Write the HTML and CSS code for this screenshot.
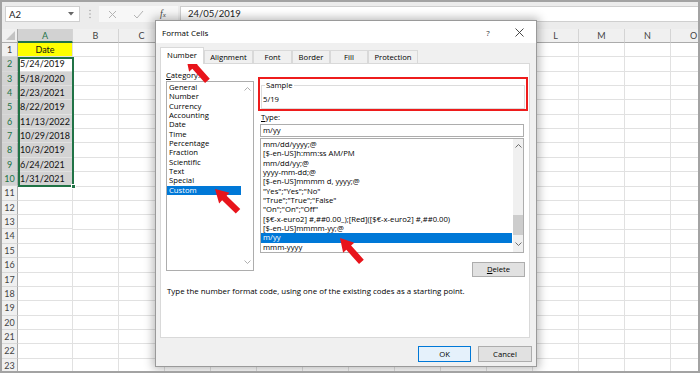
FILE: index.html
```html
<!DOCTYPE html>
<html>
<head>
<meta charset="utf-8">
<link rel="stylesheet" href="styles.css">
</head>
<body>
<div class="frame">
  <div class="fbar">
    <div class="namebox"><span>A2</span><svg class="caret" width="6" height="4" viewBox="0 0 6 4"><path d="M0 0H6L3 3.5Z" fill="#666"/></svg></div>
    <svg class="dots" width="4" height="10" viewBox="0 0 4 10"><circle cx="2" cy="1.5" r="0.7" fill="#9a9a9a"/><circle cx="2" cy="5" r="0.7" fill="#9a9a9a"/><circle cx="2" cy="8.5" r="0.7" fill="#9a9a9a"/></svg>
    <div class="fbtns">
      <svg width="9" height="9" viewBox="0 0 9 9"><path d="M1 1L8 8M8 1L1 8" stroke="#b3b3b3" stroke-width="1"/></svg>
      <svg width="11" height="9" viewBox="0 0 11 9"><path d="M1 5L4 8L10 1" stroke="#b3b3b3" stroke-width="1" fill="none"/></svg>
      <span class="fx">f<span class="fxx">x</span></span>
    </div>
    <div class="finput">24/05/2019</div>
  </div>

  <div class="sheet">
    <div class="colheads">
      <div class="corner"><svg width="9" height="9" viewBox="0 0 9 9"><path d="M9 0V9H0Z" fill="#c3c3c3"/></svg></div>
      <div class="ch cha">A</div>
      <div class="ch">B</div><div class="ch">C</div><div class="ch"></div><div class="ch"></div>
      <div class="ch"></div><div class="ch"></div><div class="ch"></div><div class="ch"></div>
      <div class="ch"></div><div class="ch"></div><div class="ch">L</div><div class="ch">M</div>
      <div class="ch">N</div><div class="ch">O</div>
    </div>
    <div class="sbody">
      <div class="rowheads">
        <div class="rh">1</div><div class="rh on">2</div><div class="rh on">3</div><div class="rh on">4</div>
        <div class="rh on">5</div><div class="rh on">6</div><div class="rh on">7</div><div class="rh on">8</div>
        <div class="rh on">9</div><div class="rh on">10</div><div class="rh">11</div><div class="rh">12</div>
        <div class="rh">13</div><div class="rh">14</div><div class="rh">15</div><div class="rh">16</div>
        <div class="rh">17</div><div class="rh">18</div><div class="rh">19</div><div class="rh">20</div>
        <div class="rh">21</div><div class="rh">22</div><div class="rh">23</div>
      </div>
      <div class="cola">
        <div class="cell head">Date</div>
        <div class="cell">5/24/2019</div>
        <div class="cell hl">5/18/2020</div>
        <div class="cell hl">2/23/2021</div>
        <div class="cell hl">8/22/2019</div>
        <div class="cell hl">11/13/2022</div>
        <div class="cell hl">10/29/2018</div>
        <div class="cell hl">10/3/2019</div>
        <div class="cell hl">6/24/2021</div>
        <div class="cell hl">1/31/2021</div>
        <div class="cell"></div><div class="cell"></div><div class="cell"></div><div class="cell"></div>
        <div class="cell"></div><div class="cell"></div><div class="cell"></div><div class="cell"></div>
        <div class="cell"></div><div class="cell"></div><div class="cell"></div><div class="cell"></div>
        <div class="cell"></div>
        <div class="selbox"><span class="handle"></span></div>
      </div>
      <div class="rest"></div>
    </div>
  </div>

  <div class="dialog">
    <div class="dtitle">
      <span class="dt">Format Cells</span>
      <span class="help">?</span>
      <svg class="dclose" width="9" height="9" viewBox="0 0 9 9"><path d="M0.5 0.5L8.5 8.5M8.5 0.5L0.5 8.5" stroke="#333" stroke-width="0.9"/></svg>
    </div>
    <div class="dbody">
      <div class="tabs">
        <div class="tab on w44">Number</div>
        <div class="tab w49">Alignment</div>
        <div class="tab w39">Font</div>
        <div class="tab w38">Border</div>
        <div class="tab w38">Fill</div>
        <div class="tab w50">Protection</div>
      </div>
      <div class="panel">
        <div class="prow">
          <div class="pleft">
            <div class="lbl"><u>C</u>ategory:</div>
            <div class="lbox cat">
              <div class="items">
                <div class="it">General</div>
                <div class="it">Number</div>
                <div class="it">Currency</div>
                <div class="it">Accounting</div>
                <div class="it">Date</div>
                <div class="it">Time</div>
                <div class="it">Percentage</div>
                <div class="it">Fraction</div>
                <div class="it">Scientific</div>
                <div class="it">Text</div>
                <div class="it">Special</div>
                <div class="it sel">Custom</div>
              </div>
              <div class="vs vs-cat">
                <svg class="chev" width="7" height="4" viewBox="0 0 7 4"><path d="M0.5 3.5L3.5 0.5L6.5 3.5" stroke="#a6a6a6" fill="none" stroke-width="0.9"/></svg>
                <svg class="chev" width="7" height="4" viewBox="0 0 7 4"><path d="M0.5 0.5L3.5 3.5L6.5 0.5" stroke="#a6a6a6" fill="none" stroke-width="0.9"/></svg>
              </div>
            </div>
          </div>
          <div class="pright">
            <div class="redbox">
              <fieldset class="sample">
                <legend>Sample</legend>
                <div class="sv">5/19</div>
              </fieldset>
            </div>
            <div class="lbl tlbl"><u>T</u>ype:</div>
            <div class="tinput">m/yy</div>
            <div class="lbox types">
              <div class="items">
                <div class="it">mm/dd/yyyy;@</div>
                <div class="it">[$-en-US]h:mm:ss AM/PM</div>
                <div class="it">mm/dd/yy;@</div>
                <div class="it">yyyy-mm-dd;@</div>
                <div class="it">[$-en-US]mmmm d, yyyy;@</div>
                <div class="it">"Yes";"Yes";"No"</div>
                <div class="it">"True";"True";"False"</div>
                <div class="it">"On";"On";"Off"</div>
                <div class="it">[$€-x-euro2] #,##0.00_);[Red]([$€-x-euro2] #,##0.00)</div>
                <div class="it">[$-en-US]mmmm-yy;@</div>
                <div class="it sel">m/yy</div>
                <div class="it">mmm-yyyy</div>
              </div>
              <div class="vs vs-type">
                <svg class="chev" width="7" height="4" viewBox="0 0 7 4"><path d="M0.5 3.5L3.5 0.5L6.5 3.5" stroke="#606060" fill="none" stroke-width="0.9"/></svg>
                <div class="track"><div class="thumb"></div></div>
                <svg class="chev" width="7" height="4" viewBox="0 0 7 4"><path d="M0.5 0.5L3.5 3.5L6.5 0.5" stroke="#606060" fill="none" stroke-width="0.9"/></svg>
              </div>
            </div>
            <div class="brow"><div class="btn del"><u>D</u>elete</div></div>
          </div>
        </div>
        <div class="hint">Type the number format code, using one of the existing codes as a starting point.</div>
      </div>
      <div class="dbtns">
        <div class="btn ok">OK</div>
        <div class="btn cancel">Cancel</div>
      </div>
    </div>
  </div>

  <svg class="arrows" width="700" height="373" viewBox="0 0 700 373">
    <polygon transform="translate(186 57) rotate(48)" points="0,0 13,-7.5 13,-3.2 32,-3.2 32,3.2 13,3.2 13,7.5" fill="#e8141b"/>
    <polygon transform="translate(215 189) rotate(44)" points="0,0 13,-7.5 13,-3.2 32,-3.2 32,3.2 13,3.2 13,7.5" fill="#e8141b"/>
    <polygon transform="translate(340 238) rotate(48)" points="0,0 13,-7.5 13,-3.2 32,-3.2 32,3.2 13,3.2 13,7.5" fill="#e8141b"/>
  </svg>
</div>
</body>
</html>
```

FILE: styles.css
```css
* { box-sizing: border-box; margin: 0; padding: 0; }
html, body { width: 700px; height: 373px; overflow: hidden; background: #fff; }
body { font-family: "Open Sans", "Noto Sans", sans-serif; color: #000; }

.frame {
  position: relative;
  width: 700px;
  height: 373px;
  border: 2px solid #a3a3a3;
  overflow: hidden;
  display: flex;
  flex-direction: column;
  background: #fff;
}

/* formula bar */
.fbar {
  height: 27px;
  flex: none;
  background: #ececec;
  display: flex;
  align-items: flex-start;
  padding: 4px 0 0 3px;
}
.namebox {
  width: 75px;
  height: 16px;
  background: #fff;
  border: 1px solid #cfcfcf;
  display: flex;
  align-items: center;
  justify-content: space-between;
  padding: 0 5px 0 3px;
  font: 9.5px "Lato", sans-serif;
  color: #222;
}
.dots { margin: 3px 0 0 8px; }
.fbtns {
  margin-left: 7px;
  width: 79px;
  height: 16px;
  background: #f7f7f7;
  display: flex;
  align-items: center;
  padding-left: 9px;
  gap: 16px;
}
.fx { font: italic 9.5px "Liberation Serif", serif; color: #444; }
.fxx { font-size: 7px; }
.finput {
  flex: 1;
  height: 16px;
  margin-left: 2px;
  background: #fff;
  border: 1px solid #cfcfcf;
  border-right: none;
  padding-left: 7px;
  font: 9.5px "Lato", sans-serif;
  line-height: 14px;
  color: #222;
}

/* sheet */
.sheet { flex: 1; display: flex; flex-direction: column; min-height: 0; }
.colheads { display: flex; height: 14px; flex: none; }
.corner {
  width: 16px; flex: none;
  background: #f0f0f0;
  border-right: 1px solid #ababab;
  border-bottom: 1px solid #ababab;
  display: flex; align-items: flex-end; justify-content: flex-end;
  padding: 0 2px 2px 0;
}
.ch {
  width: 46px; flex: none;
  background: #f0f0f0;
  border-right: 1px solid #d4d4d4;
  border-bottom: 1px solid #ababab;
  text-align: center;
  font: 9px "Lato", sans-serif;
  line-height: 13px;
  color: #444;
}
.ch.cha {
  width: 55px;
  background: #d2d2d2;
  color: #217346;
  border-bottom: 2px solid #217346;
}
.sbody { flex: 1; display: flex; min-height: 0; }
.rowheads { width: 16px; flex: none; }
.rh {
  height: 14.35px;
  background: #f0f0f0;
  border-bottom: 1px solid #d8d8d8;
  border-right: 1px solid #ababab;
  text-align: center;
  font: 9px "Lato", sans-serif;
  line-height: 13.35px;
  color: #444;
}
.rh.on { background: #d2d2d2; color: #217346; }
.cola { width: 55px; flex: none; position: relative; }
.cell {
  height: 14.35px;
  border-bottom: 1px solid #e1e1e1;
  border-right: 1px solid #e1e1e1;
  padding-left: 2px;
  font: 9px "Lato", sans-serif;
  line-height: 13.35px;
  color: #111;
  white-space: nowrap;
}
.cell.head { background: #ffff00; text-align: center; padding-left: 0; }
.cell.hl { background: #d3d3d3; }
.selbox {
  position: absolute;
  left: 0; top: 13.85px;
  width: 56px; height: 130.2px;
  border: 2px solid #217346;
}
.handle {
  position: absolute;
  right: -4px; bottom: -4px;
  width: 5px; height: 5px;
  background: #217346;
  border: 1px solid #fff;
}
.rest {
  flex: 1;
  background-image:
    repeating-linear-gradient(to bottom, transparent 0, transparent 13.35px, #e1e1e1 13.35px, #e1e1e1 14.35px),
    repeating-linear-gradient(to right, transparent 0, transparent 45px, #e1e1e1 45px, #e1e1e1 46px);
}

/* dialog */
.dialog {
  position: absolute;
  left: 153px; top: 18px;
  width: 382px; height: 347px;
  border: 1px solid #9a9a9a;
  background: #f0f0f0;
  box-shadow: 0 0 9px 2px rgba(0, 0, 0, 0.28);
  display: flex;
  flex-direction: column;
  font-size: 7.7px;
}
.dtitle {
  height: 22px; flex: none;
  background: #fff;
  display: flex;
  align-items: center;
  padding-left: 6px;
}
.dt { flex: 1; font-size: 8px; }
.help { width: 12px; text-align: center; font-size: 8px; color: #333; }
.dclose { margin: 0 12px 0 21px; }
.dbody { flex: 1; padding: 4px 4px 0 4px; display: flex; flex-direction: column; }
.tabs { display: flex; align-items: flex-end; height: 16px; position: relative; z-index: 1; }
.tab {
  height: 13px;
  border: 1px solid #d9d9d9;
  border-bottom: none;
  background: #f0f0f0;
  text-align: center;
  line-height: 12px;
}
.tab.on { height: 17px; margin-bottom: -1px; background: #fff; line-height: 15px; }
.w44 { width: 44px; } .w49 { width: 49px; } .w39 { width: 39px; }
.w38 { width: 38px; } .w50 { width: 50px; }
.panel {
  width: 370px; height: 275px;
  background: #fff;
  border: 1px solid #d9d9d9;
  padding-left: 5px;
  display: flex; flex-direction: column;
}
.prow { display: flex; gap: 4px; }
.pleft { width: 88px; padding-top: 5px; }
.lbl { height: 12px; line-height: 12px; }
.lbox {
  border: 1px solid #828790;
  background: #fff;
  display: flex;
  overflow: hidden;
}
.lbox.cat { height: 190px; border-color: #adadad; }
.items { flex: 1; padding-top: 1px; margin-right: 1px; }
.it { height: 9.33px; line-height: 9.33px; padding-left: 2px; white-space: nowrap; overflow: hidden; }
.it.sel { background: #0078d7; color: #fff; }
.vs { width: 11px; flex: none; display: flex; flex-direction: column; align-items: center; justify-content: space-between; padding: 5px 0 6px; }
.vs-cat { background: #fff; }
.pright { width: 270px; }
.redbox {
  margin-top: 13px;
  height: 34px;
  border: 2px solid #ee1c1c;
  padding: 1px 1px 0 1px;
}
.sample {
  height: 29px;
  border: 1px solid #dcdcdc;
  padding: 0 1px;
}
.sample legend { line-height: 10px; padding: 0 1px; margin-left: 2px; }
.sv { padding-top: 3px; line-height: 12px; }
.tlbl { padding-left: 3px; }
.tinput {
  margin: 1px 4px 0 2px;
  height: 13px;
  border: 1px solid #adadad;
  line-height: 11px;
  padding-left: 2px;
}
.lbox.types { margin: 1px 4px 0 2px; height: 115px; border-color: #adadad; }
.vs-type { width: 10px; background: #f0f0f0; padding: 5px 0 6px; }
.track { flex: 1; width: 100%; padding-top: 67px; }
.thumb { width: 100%; height: 20px; background: #cdcdcd; }
.brow { display: flex; justify-content: flex-end; margin: 9px 3px 0 0; }
.btn {
  height: 16px;
  border: 1px solid #adadad;
  background: #e1e1e1;
  text-align: center;
  line-height: 14px;
}
.del { width: 53px; height: 15px; line-height: 13px; }
.hint { margin-top: 9px; padding-left: 1px; line-height: 11px; font-size: 7.9px; }
.dbtns { display: flex; justify-content: flex-end; gap: 7px; margin-top: 8px; }
.ok { width: 53px; background: #e5f1fb; border-color: #0078d7; }
.cancel { width: 54px; }

.arrows { position: absolute; left: -2px; top: -2px; pointer-events: none; }
```
